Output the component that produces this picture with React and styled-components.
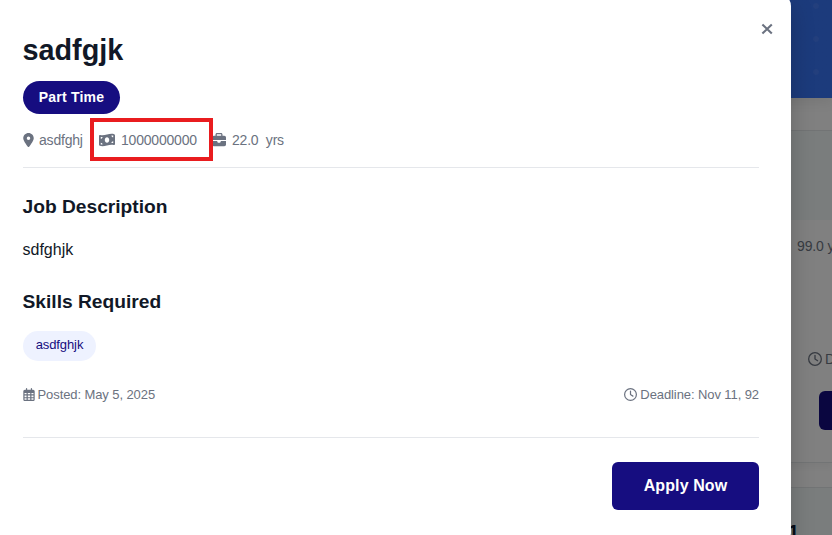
import React from "react";
import styled, { createGlobalStyle } from "styled-components";
import { FaLocationDot, FaMoneyBillWave, FaBriefcase, FaRegCalendarDays, FaRegClock } from "react-icons/fa6";

const GlobalStyle = createGlobalStyle`
  * { box-sizing: border-box; }
  body { margin: 0; overflow: hidden; font-family: "Liberation Sans", Arial, sans-serif; color: #111827; }
  h1, h2, p { margin: 0; }
  svg { flex: none; display: block; }
`;

const Page = styled.div`
  position: relative;
  width: 832px;
  height: 535px;
  overflow: hidden;
  background: #808080;
`;

const Hero = styled.header`
  height: 98px;
  background:
    radial-gradient(circle at 16px 6px, #233f7d 2.4px, transparent 3.4px) 800px 0 / 33px 33px,
    linear-gradient(90deg, #1c3879, #1c3b7c);
  box-shadow: 0 4px 12px rgba(0, 0, 0, 0.08);
`;

const Listing = styled.main`
  display: flex;
  flex-direction: column;
  gap: 24px;
  padding-top: 32px;
`;

const JobCard = styled.article`
  height: 333px;
  flex: none;
  margin-left: 480px;
  border: solid #727475;
  border-width: 1px 0;
  padding-left: 317px;
  white-space: nowrap;
  box-shadow: 0 4px 6px rgba(0, 0, 0, 0.04);
`;

const CardHead = styled.div`
  height: 89px;
  margin-left: -317px;
  padding: 33px 0 0 308px;
  background: #7a7d7d;
  color: #080c18;
  font-size: 20px;
  font-weight: 700;
`;

const CardMeta = styled.div`
  padding-top: 18px;
  color: #373b42;
  font-size: 14px;
  letter-spacing: -0.15px;
  line-height: 16px;
`;

const CardDeadline = styled.div`
  display: flex;
  align-items: center;
  gap: 3px;
  margin: 97px 0 0 11px;
  color: #373b42;
  font-size: 14px;
  line-height: 16px;
`;

const CardButton = styled.div`
  width: 120px;
  height: 39px;
  margin: 24px 0 0 22px;
  border-radius: 6px;
  background: #0a0640;
`;

const Dialog = styled.section`
  position: absolute;
  top: -6px;
  left: -41px;
  width: 832px;
  height: 550px;
  padding: 38px 32px 0 64px;
  border-radius: 12px;
  background: #fff;
  box-shadow: 0 10px 25px rgba(0, 0, 0, 0.2);
`;

const Close = styled.button`
  position: absolute;
  top: 27px;
  right: 16px;
  width: 16px;
  height: 16px;
  padding: 0;
  border: 0;
  background: none;
  color: #6b7280;
`;

const Title = styled.h1`
  margin-left: -0.5px;
  font-size: 28.8px;
  line-height: 36px;
`;

const TypeBadge = styled.span`
  display: block;
  width: 97px;
  height: 33px;
  margin-top: 13px;
  border-radius: 17px;
  background: #160d80;
  color: #fff;
  font-size: 14px;
  letter-spacing: 0.2px;
  font-weight: 700;
  line-height: 33px;
  text-align: center;
`;

const Meta = styled.div`
  display: flex;
  align-items: center;
  height: 54px;
  width: 736px;
  padding-bottom: 1px;
  border-bottom: 1px solid #e5e7eb;
  color: #6b7280;
  font-size: 14px;
  letter-spacing: -0.2px;
`;

const MetaItem = styled.span`
  display: flex;
  align-items: center;
  gap: ${(p) => p.$gap}px;
  width: ${(p) => p.$width}px;
  white-space: pre;
`;

const PinIcon = styled(FaLocationDot)`
  width: 11px;
  height: 14px;
  margin-left: -0.5px;
`;

const CalendarIcon = styled(FaRegCalendarDays)`
  width: 12px;
  height: 13px;
  margin-left: -0.5px;
`;

const Highlight = styled.div`
  position: absolute;
  top: 123.6px;
  left: 131px;
  width: 123px;
  height: 43.5px;
  border: 4px solid #e91c1f;
`;

const Heading = styled.h2`
  margin: ${(p) => p.$top}px 0 0 -0.5px;
  font-size: 19.2px;
  line-height: 24px;
`;

const Description = styled.p`
  && { margin: 18px 0 0 -0.5px; }
  font-size: 16px;
  line-height: 26px;
`;

const Skill = styled.span`
  display: block;
  width: 73px;
  height: 30px;
  margin-top: 17px;
  border-radius: 15px;
  background: #eef2ff;
  color: #160d80;
  font-size: 13px;
  letter-spacing: -0.1px;
  line-height: 28px;
  text-align: center;
`;

const Dates = styled.div`
  display: flex;
  justify-content: space-between;
  width: 736px;
  height: 77px;
  padding-top: 24px;
  border-bottom: 1px solid #e5e7eb;
  color: #6b7280;
  font-size: 13px;
  letter-spacing: -0.09px;
  line-height: 18px;
`;

const DateItem = styled.span`
  display: flex;
  align-items: center;
  height: 19px;
  gap: 3px;
`;

const Actions = styled.footer`
  display: flex;
  justify-content: flex-end;
  width: 736px;
  padding-top: 24px;
`;

const Apply = styled.button`
  width: 147px;
  height: 48px;
  padding: 0;
  border: 0;
  border-radius: 6px;
  background: #160d80;
  color: #fff;
  font: 700 16px "Liberation Sans", Arial, sans-serif;
  letter-spacing: 0.1px;
`;

export default function App() {
  return (
    <Page>
      <GlobalStyle />
      <Hero />
      <Listing>
        <JobCard>
          <CardHead />
          <CardMeta>99.0 yrs</CardMeta>
          <CardDeadline><FaRegClock size={14} />Deadline</CardDeadline>
          <CardButton />
        </JobCard>
        <JobCard>
          <CardHead>1</CardHead>
        </JobCard>
      </Listing>
      <Dialog role="dialog">
        <Close aria-label="Close">
          <svg width="16" height="16" viewBox="0 0 16 16" stroke="currentColor" strokeWidth="2.1">
            <path d="M3.4 3.4l9.4 9.2M12.8 3.4l-9.4 9.2" />
          </svg>
        </Close>
        <Title>sadfgjk</Title>
        <TypeBadge>Part Time</TypeBadge>
        <Meta>
          <MetaItem $gap={5.5} $width={76}><PinIcon />asdfghj</MetaItem>
          <MetaItem $gap={6} $width={113}><FaMoneyBillWave size={16} />1000000000</MetaItem>
          <MetaItem $gap={6}><FaBriefcase size={14} />22.0{"  "}yrs</MetaItem>
        </Meta>
        <Highlight />
        <Heading $top={27}>Job Description</Heading>
        <Description>sdfghjk</Description>
        <Heading $top={27}>Skills Required</Heading>
        <Skill>asdfghjk</Skill>
        <Dates>
          <DateItem><CalendarIcon />Posted: May 5, 2025</DateItem>
          <DateItem><FaRegClock size={13} />Deadline: Nov 11, 92</DateItem>
        </Dates>
        <Actions><Apply>Apply Now</Apply></Actions>
      </Dialog>
    </Page>
  );
}
